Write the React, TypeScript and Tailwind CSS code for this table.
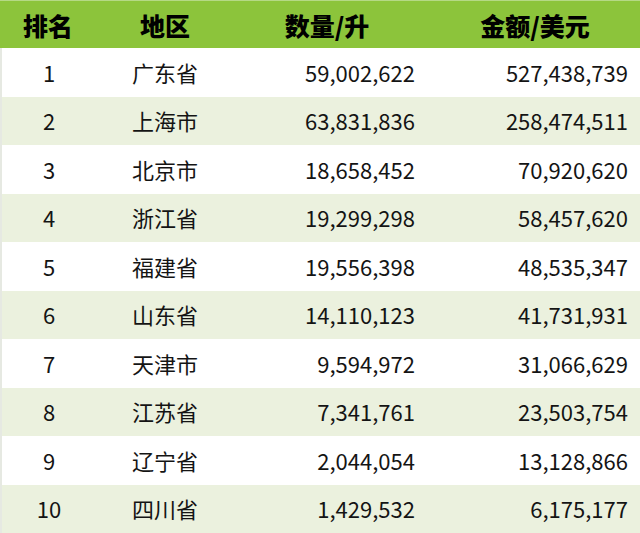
const ROWS: [string, string, string, string][] = [
  ['1', '广东省', '59,002,622', '527,438,739'],
  ['2', '上海市', '63,831,836', '258,474,511'],
  ['3', '北京市', '18,658,452', '70,920,620'],
  ['4', '浙江省', '19,299,298', '58,457,620'],
  ['5', '福建省', '19,556,398', '48,535,347'],
  ['6', '山东省', '14,110,123', '41,731,931'],
  ['7', '天津市', '9,594,972', '31,066,629'],
  ['8', '江苏省', '7,341,761', '23,503,754'],
  ['9', '辽宁省', '2,044,054', '13,128,866'],
  ['10', '四川省', '1,429,532', '6,175,177'],
];

export default function App() {
  return (
    <div
      className="flex h-[533px] w-[640px] flex-col overflow-hidden bg-white text-[#141414]"
      style={{ fontFamily: '"Noto Sans CJK SC", "Noto Sans", sans-serif' }}
    >
      {/* header */}
      <div className="flex h-[48px] shrink-0 items-center border-t border-[#b5d985] bg-[#8cc43b] pt-[2px] text-[25px] font-black text-black">
        <div className="w-[96px] text-center">排名</div>
        <div className="w-[138px] text-center">地区</div>
        <div className="w-[196px] pr-[10px] text-center">数量/升</div>
        <div className="w-[210px] text-center">金额/美元</div>
      </div>

      {ROWS.map(([rank, region, qty, amount], i) => (
        <div
          key={rank}
          className={`flex h-[48.5px] shrink-0 items-center border-l-2 border-[#e6e9e2] text-[22px] ${
            i % 2 === 1 ? 'bg-[#ebf1de]' : 'bg-white'
          }`}
        >
          <div className="w-[94px] text-center">{rank}</div>
          <div className="w-[138px] text-center">{region}</div>
          <div className="w-[196px] pr-[15px] text-right">{qty}</div>
          <div className="w-[210px] pr-[12px] text-right">{amount}</div>
        </div>
      ))}
    </div>
  );
}
